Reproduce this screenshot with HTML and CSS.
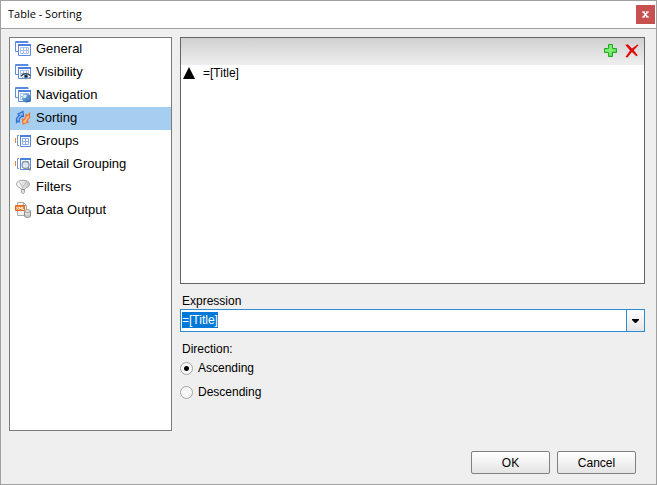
FILE: index.html
```html
<!DOCTYPE html>
<html lang="en">
<head>
<meta charset="utf-8">
<title>Table - Sorting</title>
<link rel="stylesheet" href="styles.css">
</head>
<body>
<svg class="defs" aria-hidden="true">
  <defs>
    <linearGradient id="globe-fill" x1="0" y1="0" x2="1" y2="1">
      <stop offset="0" stop-color="#9ccbee"/><stop offset="1" stop-color="#17569c"/>
    </linearGradient>
    <linearGradient id="funnel-fill" x1="0" y1="0" x2="1" y2="0">
      <stop offset="0" stop-color="#ffffff"/><stop offset="1" stop-color="#c4c4c4"/>
    </linearGradient>
    <linearGradient id="plus-fill" x1="0" y1="0" x2="1" y2="1">
      <stop offset="0" stop-color="#5be052"/><stop offset=".5" stop-color="#84f078"/><stop offset="1" stop-color="#27c32a"/>
    </linearGradient>
    <symbol id="tables" viewBox="0 0 16 16">
      <path d="M.5 10.500V.5H13V2M0 1.500H13M.5 10.500H3" fill="none" stroke="#5b8be0"/>
      <path d="M3.500 3.500H15.500V14.500H3.500Z" fill="#fff" stroke="#5b8be0"/>
      <path d="M3 3H16V5H3Z" fill="#4b80dc"/>
      <path d="M5.500 6.500H13.500V12.500H5.500ZM8.500 6.500V12.500M11.500 6.500V12.500M5.500 9.500H13.500" fill="none" stroke="#a9bfe8"/>
    </symbol>
    <symbol id="group" viewBox="0 0 16 16">
      <path d="M.5 5V10" stroke="#dc8b3c"/>
      <path d="M4 2.500H2.500V12.500H4" fill="none" stroke="#8196b8"/>
      <path d="M5.500 2.500H15.500V13.500H5.500Z" fill="#fff" stroke="#5b8be0"/>
      <path d="M5 2H16V4H5Z" fill="#4b80dc"/>
      <path d="M7.500 5.500H13.500V11.500H7.500ZM10.500 5.500V11.500M7.500 8.500H13.500" fill="none" stroke="#8eade6"/>
    </symbol>
  </defs>
</svg>
<main class="dialog">
  <header class="titlebar">
    <h1>Table - Sorting</h1>
    <button class="close" type="button" aria-label="Close">
      <svg width="7" height="7" viewBox="0 0 7 7"><path d="M1.500 1L5.500 6M5.500 1L1.500 6" stroke="#fff" stroke-width="1.600"/><path d="M0 1H3M4 1H7M0 6H3M4 6H7" stroke="#fff"/></svg>
    </button>
  </header>
  <form class="body">
    <nav class="pages" aria-label="Pages">
      <a href="#general"><svg class="icon"><use href="#tables"/></svg>General</a>
      <a href="#visibility"><svg class="icon" viewBox="0 0 16 16"><use href="#tables"/>
        <path d="M6 12Q10.500 7.500 16 12Q11 17 6 12Z" fill="#fff"/>
        <path d="M6 12Q10.500 7.500 16 12" fill="none" stroke="#444" stroke-width="1.200"/><path d="M7 13.500Q11 16.500 15 13.500" fill="none" stroke="#999"/>
        <circle cx="11" cy="12.500" r="2.200" fill="#5590c0"/><circle cx="11" cy="12.300" r="1.200" fill="#142536"/></svg>Visibility</a>
      <a href="#navigation"><svg class="icon" viewBox="0 0 16 16"><use href="#tables"/>
        <circle cx="11.500" cy="11" r="4.500" fill="url(#globe-fill)"/><path d="M8 9L10 7.500L12 8.500L10.500 11L8.500 11Z" fill="#d5ebfa"/><path d="M12 12L14.500 10L14 13Z" fill="#5aa3dd"/></svg>Navigation</a>
      <a class="current" href="#sorting" aria-current="page"><svg class="icon" viewBox="0 0 16 16">
        <path d="M1.500 12.500L1.500 8.500L4.500 5L3 4L8 1.500L8.500 6.500L7 5.800L4.500 9L4 12L2.800 11Z" fill="#8fbaf4" stroke="#2f6fd0" stroke-width="1.200"/>
        <path d="M8 14L7.500 9L9 9.800L11 7L11 4.500L12.500 5.500L14.500 3.500L14.500 7.500L11.700 11L13.200 12Z" fill="#ffc080" stroke="#f27430" stroke-width="1.200"/></svg>Sorting</a>
      <a href="#groups"><svg class="icon"><use href="#group"/></svg>Groups</a>
      <a href="#detail-grouping"><svg class="icon" viewBox="0 0 16 16"><use href="#group"/>
        <circle cx="10.500" cy="9" r="3.500" fill="#dcecf8" fill-opacity=".85" stroke="#8d969f" stroke-width="1.300"/><path d="M13 11.500L15.500 14.500" stroke="#888" stroke-width="1.800"/></svg>Detail Grouping</a>
      <a href="#filters"><svg class="icon" viewBox="0 0 16 16">
        <path d="M1.500 5C1.500 0 14.500 0 14.500 5C14.500 8 10.500 8.500 9.500 10.500V13.500Q8 15.500 6.500 13.500V10.500C5.500 8.500 1.500 8 1.500 5Z" fill="url(#funnel-fill)" stroke="#a5a5a5"/>
        <path d="M4.500 3L7.500 8L11.500 3M7.500 8V11" fill="none" stroke="#bdbdbd"/><path d="M6.500 10.500H9.500" stroke="#888"/></svg>Filters</a>
      <a href="#data-output"><svg class="icon" viewBox="0 0 16 16">
        <path d="M2.500 .5H8.500L11.500 3.500V13.500H2.500Z" fill="#f2f2f2" stroke="#aaa"/><path d="M8.500 .5V3.500H11.500" fill="none" stroke="#aaa"/>
        <path d="M.5 3.500H9.500V8.500H.5Z" fill="#f07c2e" stroke="#e66a19"/><path d="M1.500 5L3.500 7.500M3.500 5L1.500 7.500M4.500 7.500V5L5.500 6.500L6.500 5V7.500M7.500 5V7.500H9" fill="none" stroke="#fff" stroke-width=".8"/>
        <path d="M9.500 9V14C9.500 16 15.500 16 15.500 14V9Z" fill="#c9c9c9" stroke="#8d8d8d"/><ellipse cx="12.500" cy="9" rx="3" ry="1.300" fill="#f5f5f5" stroke="#999"/><path d="M10 11.500Q12.500 13 15 11.500" fill="none" stroke="#eee"/></svg>Data Output</a>
    </nav>
    <section class="page">
      <div class="sorts">
        <div class="toolbar">
          <button type="button" aria-label="Add"><svg width="14" height="14" viewBox="0 0 14 14"><path d="M4.500 .5H8.500V4.500H12.500V8.500H8.500V12.500H4.500V8.500H.5V4.500H4.500Z" fill="url(#plus-fill)" stroke="#20a925"/></svg></button>
          <button type="button" aria-label="Delete"><svg width="14" height="14" viewBox="0 0 14 14"><path d="M.3 1L2.800 .2L7 4.600L12.500 .5L13.700 1L8.700 6.300L12.800 11.200L11.300 12.300L6.900 8L2.500 13.600L.5 13L5 6.500Z" fill="#e00b0b"/></svg></button>
        </div>
        <ul>
          <li><svg width="12" height="12" viewBox="0 0 12 12"><path d="M6 0L12 12H0Z"/></svg>=[Title]</li>
        </ul>
      </div>
      <label class="caption" for="expression">Expression</label>
      <div class="combo">
        <input id="expression" type="text" value="=[Title]" autocomplete="off" spellcheck="false">
        <button type="button" aria-label="Show expressions"><svg width="8" height="4" viewBox="0 0 8 4"><path d="M0 0H7V1L4 4H3L0 1Z"/></svg></button>
      </div>
      <fieldset>
        <legend>Direction:</legend>
        <label><input type="radio" name="direction" checked>Ascending</label>
        <label><input type="radio" name="direction">Descending</label>
      </fieldset>
    </section>
  </form>
  <footer>
    <button type="button">OK</button>
    <button type="button">Cancel</button>
  </footer>
</main>
<script src="dialog.js"></script>
</body>
</html>
```
FILE: dialog.js
```js
// The expression opens ready to be overwritten.
const expression = document.getElementById("expression");
expression.focus();
expression.select();
```
FILE: styles.css
```css
* { box-sizing: border-box; }

body {
  margin: 0;
  font: 12px/16px "Liberation Sans", Arial, sans-serif;
  color: #000;
}

.defs { position: absolute; width: 0; height: 0; }

button { font: inherit; color: inherit; padding: 0; }

.dialog {
  display: flex;
  flex-direction: column;
  min-height: 100vh;
  background: #efefef;
  border: 1px solid #a0a0a0;
}

.titlebar {
  display: flex;
  align-items: center;
  justify-content: space-between;
  height: 28px;
  padding: 0 1px 0 7px;
  background: #fff;
  border-bottom: 1px solid #a0a0a0;
}

h1 {
  margin: 0;
  padding-bottom: 2px;
  font: 11px/16px "Open Sans", "Noto Sans", sans-serif;
}

.close {
  display: flex;
  align-items: center;
  justify-content: center;
  width: 19px;
  height: 19px;
  background: #c75050;
  border: 0;
}

.body {
  display: grid;
  grid-template-columns: 163px 1fr;
  gap: 8px;
  flex: 1;
  padding: 8px 11px 0 8px;
}

.pages {
  background: #fff;
  border: 1px solid #7a7a7a;
}

.pages a {
  display: flex;
  align-items: center;
  gap: 5px;
  height: 23px;
  padding: 0 0 2px 5px;
  font-size: 13px;
  color: inherit;
  text-decoration: none;
}

.pages .current { background: #a5cef0; }

.icon { width: 16px; height: 16px; }

.page { display: flex; flex-direction: column; }

.sorts {
  height: 247px;
  background: #fff;
  border: 1px solid #646464;
}

.toolbar {
  display: flex;
  align-items: center;
  justify-content: flex-end;
  gap: 7px;
  height: 27px;
  padding: 0 5px 2px 0;
  background: linear-gradient(#d0d0d0, #efefef);
}

.toolbar button {
  display: flex;
  background: none;
  border: 0;
}

ul { margin: 0; padding: 0; list-style: none; }

li {
  display: flex;
  align-items: center;
  gap: 8px;
  height: 16px;
  padding-left: 2px;
}

.caption { margin: 9px 0 0 2px; }

.combo {
  display: flex;
  height: 23px;
  border: 1px solid #2a8ad4;
}

.combo input {
  flex: 1;
  min-width: 0;
  padding: 0 1px 2px;
  border: 0;
  outline: 0;
  font: inherit;
  background: #fff;
}

.combo input::selection { background: #0078d7; color: #fff; }

.combo button {
  display: flex;
  align-items: center;
  justify-content: center;
  width: 18px;
  background: linear-gradient(#fff, #e6e6e6);
  border: 0;
  border-left: 1px solid #2a8ad4;
}

fieldset {
  margin: 9px 0 0;
  padding: 0;
  border: 0;
}

legend { padding: 0 0 0 2px; }

fieldset label {
  display: flex;
  align-items: center;
  gap: 5px;
  height: 24px;
  padding-bottom: 2px;
}

input[type="radio"] {
  appearance: none;
  width: 13px;
  height: 13px;
  margin: 0;
  border: 1px solid #a4a4a4;
  border-radius: 50%;
  background: #f7f7f7;
}

input[type="radio"]:checked {
  background: radial-gradient(circle, #000 2px, #f7f7f7 3px);
}

footer {
  display: flex;
  justify-content: flex-end;
  gap: 7px;
  padding: 20px 20px 10px;
}

footer button {
  width: 79px;
  height: 23px;
  background: linear-gradient(#fff, #e4e4e4);
  border: 1px solid #808080;
  border-radius: 2px;
}
```
